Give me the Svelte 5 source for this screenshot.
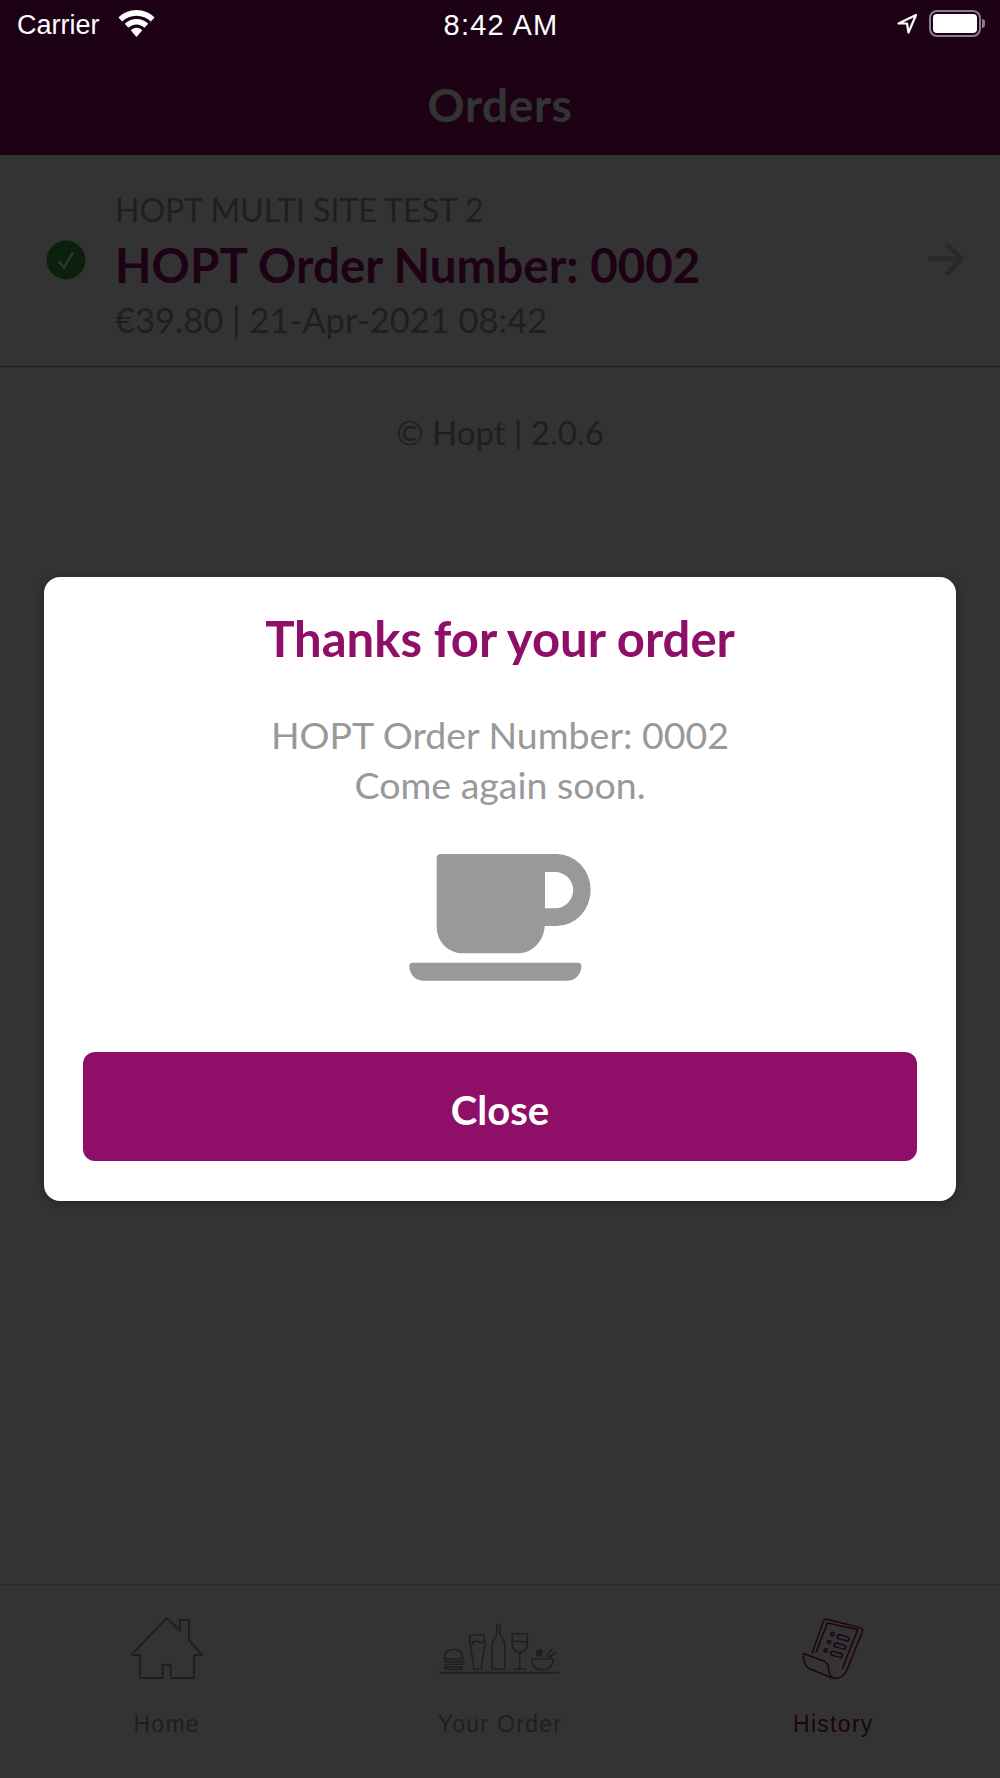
<script lang="ts">
  const tabs = ['Home', 'Your Order', 'History'];
</script>

<div class="page">
  <header class="top">
    <div class="status">
      <div class="status-left">
        <span>Carrier</span>
        <svg class="wifi" viewBox="0 0 37 27" width="37" height="27" aria-hidden="true">
          <path d="M18.5 0C11.600 0 5.200 2.800.5 7.500L4.200 11.500C8 8 13 5.800 18.500 5.800S29 8 32.800 11.500L36.500 7.500C31.800 2.800 25.400 0 18.500 0Z" fill="#fff" />
          <path d="M18.500 9C14 9 9.800 10.800 6.800 13.800L10.500 17.800C12.600 15.800 15.400 14.500 18.500 14.500S24.400 15.800 26.500 17.800L30.200 13.800C27.200 10.800 23 9 18.500 9Z" fill="#fff" />
          <path d="M18.500 17.800C16.200 17.800 14.200 18.700 12.800 20.200L18.500 27 24.200 20.200C22.800 18.700 20.800 17.800 18.500 17.800Z" fill="#fff" />
        </svg>
      </div>
      <span class="clock">8:42 AM</span>
      <div class="status-right">
        <svg viewBox="0 0 22 22" width="22" height="22" aria-hidden="true">
          <path d="M20 2 2.500 10.500h8.500l1.500 9Z" fill="none" stroke="#fff" stroke-width="2.200" stroke-linejoin="round" />
        </svg>
        <div class="battery"><div class="battery-fill"></div></div>
        <div class="battery-nub"></div>
      </div>
    </div>
    <h1>Orders</h1>
  </header>

  <main class="content">
    <div class="order-row">
      <div class="tick">
        <svg viewBox="0 0 40 40" width="40" height="40" aria-hidden="true">
          <circle cx="20" cy="20" r="19.500" fill="#37a043" />
          <path d="M12.500 21 18 27.500 27 12.500" fill="none" stroke="#fff" stroke-width="2.500" />
        </svg>
      </div>
      <div class="order-text">
        <div class="site">HOPT MULTI SITE TEST 2</div>
        <div class="number">HOPT Order Number: 0002</div>
        <div class="meta">€39.80 | 21-Apr-2021 08:42</div>
      </div>
      <svg class="arrow" viewBox="0 0 36 34" width="36" height="34" aria-hidden="true">
        <path d="M0 17H33M18 1.500 34 17 18 32.500" fill="none" stroke="#ccc" stroke-width="5" />
      </svg>
    </div>
    <p class="version">© Hopt | 2.0.6</p>
  </main>

  <nav class="tabbar">
    {#each tabs as tab, i}
      <div class="tab" class:active={i === 2}>
        <div class="tab-icon">
          {#if i === 0}
            <svg viewBox="90 78 222 192" width="74" height="64" aria-hidden="true">
              <path d="M94 195 200 84 240 122V90H267V150L306 195H282V264H212V224H188V264H120V195Z" fill="none" stroke="#999" stroke-width="6" stroke-linejoin="round" />
            </svg>
          {:else if i === 1}
            <svg viewBox="55 90 370 165" width="123" height="55" aria-hidden="true">
              <g fill="none" stroke="#999" stroke-width="5" stroke-linejoin="round" stroke-linecap="round">
                <path d="M60 245H418" />
                <path d="M74 204C74 184 86 175 102 175S130 184 130 204ZM72 212H132M74 220H130M76 228C76 232 80 235 84 235H120C124 235 128 232 128 228Z" />
                <path d="M150 134C150 130 190 130 194 134L196 160 186 224V235H162V224L152 160ZM150 140V158C154 164 160 162 160 152 166 150 176 148 180 154 186 158 194 152 195 146" />
                <path d="M232 100H242V130C242 140 256 145 256 160V228C256 232 254 235 250 235H224C220 235 218 232 218 228V160C218 145 232 140 232 130Z" />
                <path d="M278 128H324V160C324 174 314 184 301 184S278 174 278 160ZM278 152C292 146 310 158 324 150M301 184V233M285 235H319" />
                <path d="M337 204H402C402 222 390 236 376 236H362C348 236 337 222 337 204ZM382 198 396 176M390 200 408 184" />
                <path d="M353 178H367V194H353Z" fill="#999" />
              </g>
            </svg>
          {:else}
            <svg viewBox="125 78 192 190" width="64" height="63" aria-hidden="true">
              <g fill="none" stroke="#8f0e68" stroke-width="4.500" stroke-linejoin="round" stroke-linecap="round">
                <path d="M158 188 190 96C192 88 196 84 204 85L302 110C310 112 312 116 309 124L262 240C256 254 240 266 224 262 212 258 206 244 207 224L196 212 132 188C130 206 136 226 150 234L204 256C212 260 218 262 224 262" />
                <path d="M170 184 204 96 296 116 250 232" />
                <circle cx="219" cy="130" r="5" />
                <circle cx="209" cy="154" r="5" />
                <circle cx="199" cy="179" r="5" />
                <rect x="0" y="0" width="36" height="12" rx="6" transform="translate(236 130) rotate(16)" />
                <rect x="0" y="0" width="36" height="12" rx="6" transform="translate(226 155) rotate(16)" />
                <rect x="0" y="0" width="36" height="12" rx="6" transform="translate(216 180) rotate(16)" />
              </g>
            </svg>
          {/if}
        </div>
        <span class="tab-label">{tab}</span>
      </div>
    {/each}
  </nav>

  <div class="overlay">
    <div class="modal">
      <h2>Thanks for your order</h2>
      <p class="message">HOPT Order Number: 0002<br />Come again soon.</p>
      <svg class="cup" viewBox="0 0 720 510" width="240" height="170" aria-hidden="true">
        <path fill-rule="evenodd" fill="#999" d="M182 72H530A102 108 0 0 1 530 288H494C492 335 455 370 415 370H250C205 370 170 335 170 290V84Q170 72 182 72ZM495 126V235H525A54 54 0 0 0 525 126Z" />
        <path fill="#999" d="M98 398H594Q604 398 604 408C604 435 585 452 560 452H132C107 452 88 435 88 408Q88 398 98 398Z" />
      </svg>
      <button class="close">Close</button>
    </div>
  </div>
</div>

<style>
  :global(body) { margin: 0; background: #fff; }
  .page {
    position: relative;
    width: 1000px;
    height: 1778px;
    display: flex;
    flex-direction: column;
    overflow: hidden;
    font-family: Lato, "Open Sans", sans-serif;
    color: #999;
  }
  .top {
    height: 155px;
    background: #8f0e68;
    flex: none;
  }
  .status {
    position: relative;
    z-index: 2;
    height: 50px;
    display: grid;
    grid-template-columns: 1fr auto 1fr;
    align-items: center;
    padding: 0 15px 0 17px;
    color: #fff;
    font: 27px "Liberation Sans", Arial, sans-serif;
  }
  .status-left { display: flex; align-items: center; gap: 18px; }
  .wifi { margin-top: -3px; }
  .clock { margin-top: 1px; font-size: 29px; font-weight: 500; letter-spacing: 1.200px; }
  .status-right { display: flex; align-items: center; justify-content: flex-end; gap: 11px; margin-top: -3px; }
  .battery {
    width: 52px;
    height: 27px;
    box-sizing: border-box;
    padding: 2px;
    border: 2px solid #8d7c8a;
    border-radius: 8px;
  }
  .battery-fill { height: 100%; background: #fff; border-radius: 4px; }
  .battery-nub {
    width: 3px;
    height: 9px;
    margin-left: -10px;
    background: #8d7c8a;
    border-radius: 0 3px 3px 0;
  }
  h1 {
    margin: 25px 0 0;
    text-align: center;
    color: #fff;
    font-size: 46px;
    line-height: 60px;
    font-weight: 700;
    letter-spacing: 0.600px;
  }
  .content { flex: 1; background: #fff; }
  .order-row {
    display: flex;
    align-items: center;
    height: 212px;
    box-sizing: border-box;
    border-bottom: 1px solid #999;
    padding: 0 36px 0 46px;
  }
  .tick { width: 69px; flex: none; display: flex; margin-top: -1px; }
  .order-text { flex: 1; padding-top: 8px; }
  .site { font-size: 32px; line-height: 36px; }
  .number {
    margin-top: 9px;
    color: #8f0e68;
    font-size: 47.500px;
    line-height: 56px;
    font-weight: 700;
  }
  .meta { margin-top: 9px; font-size: 34.500px; line-height: 36px; }
  .arrow { margin-top: -3px; }
  .version {
    margin: 45px 0 0;
    text-align: center;
    font-size: 33px;
    line-height: 40px;
  }
  .tabbar {
    flex: none;
    height: 194px;
    box-sizing: border-box;
    display: grid;
    grid-template-columns: repeat(3, 1fr);
    border-top: 1px solid #ccc;
    background: #fff;
  }
  .tab {
    display: flex;
    flex-direction: column;
    align-items: center;
    font: 23px "Liberation Sans", Arial, sans-serif;
    letter-spacing: 1.300px;
  }
  .tab-icon {
    height: 64px;
    margin-top: 31px;
    display: flex;
    align-items: center;
  }
  .tab-label { margin-top: 29px; line-height: 30px; }
  .tab.active { color: #8f0e68; }
  .overlay {
    position: absolute;
    inset: 0;
    z-index: 1;
    display: flex;
    align-items: center;
    justify-content: center;
    background: rgba(0, 0, 0, 0.8);
  }
  .modal {
    width: 912px;
    box-sizing: border-box;
    padding: 34px 39px 40px;
    display: flex;
    flex-direction: column;
    align-items: center;
    background: #fff;
    border-radius: 16px;
    box-shadow: 0 2px 8px rgba(0, 0, 0, 0.3);
  }
  h2 {
    margin: -3px 0 0;
    color: #8f0e68;
    font-size: 49px;
    line-height: 60px;
    font-weight: 700;
  }
  .message {
    margin: 42px 0 0;
    text-align: center;
    font-size: 37.500px;
    line-height: 50px;
  }
  .cup { display: block; margin-top: 20px; }
  .close {
    width: 100%;
    height: 109px;
    margin-top: 52px;
    padding-top: 8px;
    border: 0;
    border-radius: 12px;
    background: #8f0e68;
    color: #fff;
    font: 700 40px Lato, "Open Sans", sans-serif;
  }
</style>
